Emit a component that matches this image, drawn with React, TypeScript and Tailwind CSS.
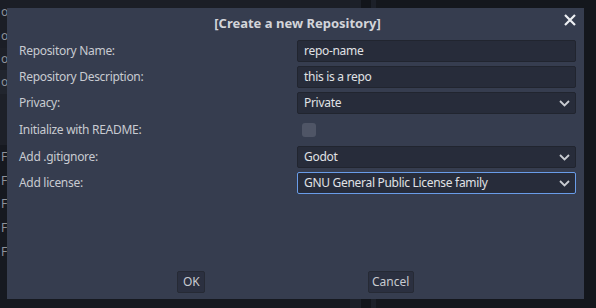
import React from 'react';

const font = { fontFamily: '"Noto Sans", "DejaVu Sans", sans-serif' };

function Chevron() {
  return (
    <svg width="11" height="7" viewBox="0 0 11 7" className="shrink-0">
      <path d="M1 1 L5.5 5.5 L10 1" fill="none" stroke="#c9ccd2" strokeWidth="1.8" />
    </svg>
  );
}

function TextBox({ value }: { value: string }) {
  return (
    <div className="flex h-[22px] items-center rounded-[2px] border border-[#21252f] bg-[#272c3a] pl-[6px] text-[#e0e2e6]">
      {value}
    </div>
  );
}

function Select({ value, focused }: { value: string; focused?: boolean }) {
  return (
    <div
      className={
        focused
          ? 'flex h-[22px] items-center justify-between rounded-[2px] border border-[#699ce8] bg-[#272c3a] pl-[6px] pr-[5px] text-[#e0e2e6]'
          : 'flex h-[22px] items-center justify-between rounded-[2px] border border-[#21252f] bg-[#272c3a] pl-[6px] pr-[5px] text-[#e0e2e6]'
      }
    >
      <span>{value}</span>
      <Chevron />
    </div>
  );
}

function Row({ label, children, tall }: { label: string; children: React.ReactNode; tall?: boolean }) {
  return (
    <div className={tall ? 'flex h-[24px] items-center' : 'flex h-[22px] items-center'}>
      <div className="w-[278px] shrink-0 text-[#c8cbd1]">{label}</div>
      <div className="flex-1">{children}</div>
    </div>
  );
}

export default function App() {
  return (
    <div className="relative h-[308px] w-[596px] overflow-hidden bg-[#161920] text-[12px]" style={font}>
      {/* editor behind the dialog */}
      <div className="flex h-full">
        <div className="flex w-[350px] flex-col text-[#8d929c]">
          <div className="flex h-[24px] items-center bg-[#1b1e26] pl-[1px]">o</div>
          <div className="flex h-[24px] items-center bg-[#1b1e26] pl-[1px]">o</div>
          <div className="flex h-[22px] items-center bg-[#1d2028] pl-[1px]">o</div>
          <div className="flex h-[24px] items-center bg-[#21252e] pl-[1px]">o</div>
          <div className="h-[51px] bg-[#1d2028]" />
          <div className="flex h-[24px] items-center pl-[1px]">F</div>
          <div className="flex h-[23px] items-center pl-[1px]">F</div>
          <div className="flex h-[24px] items-center pl-[1px]">F</div>
          <div className="flex h-[23px] items-center pl-[1px]">F</div>
          <div className="flex h-[25px] items-center pl-[1px]">F</div>
        </div>
        <div className="w-[11px] bg-[#1c2029]" />
        <div className="w-[10px] bg-[#12151b]" />
        <div className="w-[5px] bg-[#1c2029]" />
        <div className="flex-1 bg-[#14171d]" />
      </div>

      {/* dialog */}
      <div className="absolute left-[7px] top-[8px] flex h-[291px] w-[577px] flex-col bg-[#363d4f] pl-[12px] pr-[8px] pb-[6px]">
        <div className="relative flex h-[32px] items-center justify-center">
          <span className="text-[13px] font-bold text-[#d3d5da]">[Create a new Repository]</span>
          <svg width="12" height="12" viewBox="0 0 12 12" className="absolute right-[0px] top-[6px]">
            <path d="M1 1 L11 11 M11 1 L1 11" stroke="#eef0f3" strokeWidth="2.2" />
          </svg>
        </div>
        <div className="flex flex-col gap-[4px] tracking-[-0.3px]">
          <Row label="Repository Name:">
            <TextBox value="repo-name" />
          </Row>
          <Row label="Repository Description:">
            <TextBox value="this is a repo" />
          </Row>
          <Row label="Privacy:">
            <Select value="Private" />
          </Row>
          <Row label="Initialize with README:" tall>
            <div className="ml-[5px] h-[14px] w-[14px] rounded-[3px] bg-[#4f5566]" />
          </Row>
          <Row label="Add .gitignore:">
            <Select value="Godot" />
          </Row>
          <Row label="Add license:">
            <Select value="GNU General Public License family" focused />
          </Row>
        </div>
        <div className="flex-1" />
        <div className="-ml-[4px] flex h-[22px] items-stretch text-[#c8cbd1]">
          <div className="flex-1" />
          <div className="flex w-[28px] items-center justify-center rounded-[2px] border border-[#262a35] bg-[#2b3040]">OK</div>
          <div className="flex-1" />
          <div className="flex w-[46px] items-center justify-center rounded-[2px] border border-[#262a35] bg-[#2b3040]">Cancel</div>
          <div className="flex-1" />
        </div>
      </div>
    </div>
  );
}
